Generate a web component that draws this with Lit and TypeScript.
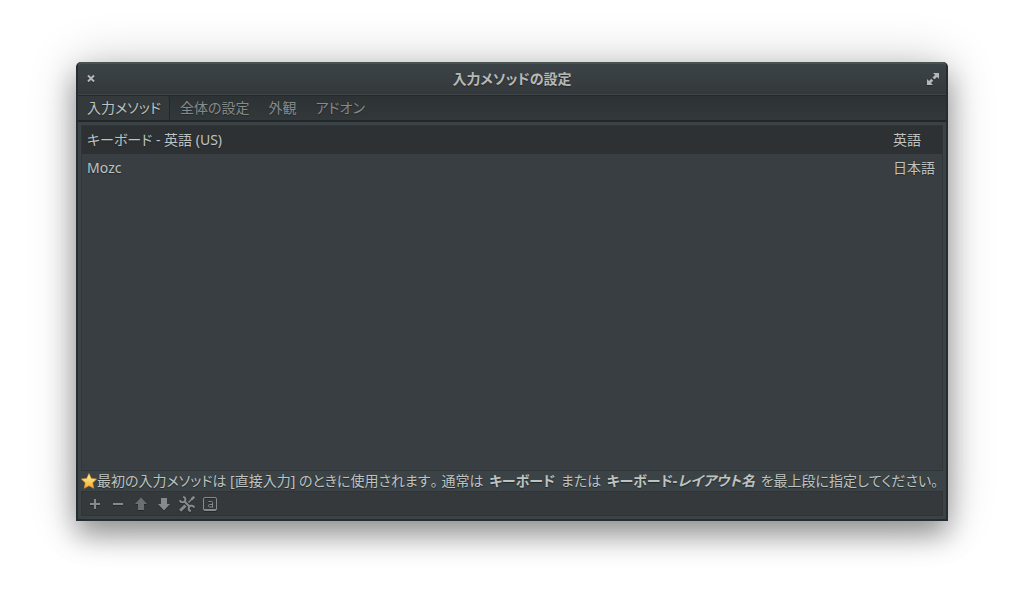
import { LitElement, html, css, svg } from "lit";
import { customElement, state } from "lit/decorators.js";

interface InputMethod {
  name: string;
  language: string;
}

const TABS = ["入力メソッド", "全体の設定", "外観", "アドオン"];

const METHODS: InputMethod[] = [
  { name: "キーボード - 英語 (US)", language: "英語" },
  { name: "Mozc", language: "日本語" },
];

const TOOLS = [
  {
    label: "追加",
    disabled: false,
    icon: svg`<path d="M8 3v10M3 8h10" fill="none" stroke="currentColor" stroke-width="2"/>`,
  },
  {
    label: "削除",
    disabled: false,
    icon: svg`<path d="M3 8h10" fill="none" stroke="currentColor" stroke-width="2"/>`,
  },
  {
    label: "上へ",
    disabled: true,
    icon: svg`<path d="M8 1.500l6 6.500h-3v6H5V8H2z" fill="currentColor"/>`,
  },
  {
    label: "下へ",
    disabled: false,
    icon: svg`<path d="M8 14.500l6-6.500h-3V2H5v6H2z" fill="currentColor"/>`,
  },
  {
    label: "設定",
    disabled: false,
    icon: svg`<g fill="none" stroke="currentColor">
      <path d="M5 5L11 11" stroke-width="2.200"/>
      <path d="M4.200 0.800A2.800 2.800 0 1 1 0.800 4.200M15.200 11.800A2.800 2.800 0 1 0 11.800 15.200" stroke-width="2"/>
      <path d="M15 1L9.500 6.500" stroke-width="1.600"/>
      <path d="M15.200 0.800L12.500 3.500" stroke-width="2.600"/>
      <path d="M6.500 9.500L1.200 14.800" stroke-width="3"/>
    </g>`,
  },
  {
    label: "キーボードレイアウト",
    disabled: false,
    icon: svg`<rect x="1.500" y="1.500" width="13" height="13" rx="1.500" fill="none" stroke="currentColor"/>
      <path d="M2 13.500h12" stroke="currentColor"/>
      <path d="M6.500 5.500H9.500Q10.500 5.500 10.500 6.500V11.500M10.500 8.500H7.500Q6.500 8.500 6.500 9.800Q6.500 11 7.500 11H10.500" fill="none" stroke="currentColor"/>`,
  },
];

@customElement("app-root")
export class AppRoot extends LitElement {
  @state() private tab = 0;
  @state() private selected = 0;

  static styles = css`
    :host {
      display: flex;
      box-sizing: border-box;
      min-height: 100vh;
      padding: 62px 76px 90px;
      background: #fff;
      color: #bec3c1;
      font-family: "Noto Sans", "Noto Sans CJK JP", sans-serif;
      font-size: 14px;
      line-height: 20px;
      font-feature-settings: "palt";
      font-kerning: none;
      text-shadow: 0 1px 1px #24282a;
    }
    button {
      margin: 0;
      border: 0;
      background: none;
      color: inherit;
      font: inherit;
      font-feature-settings: inherit;
      font-kerning: inherit;
      text-shadow: inherit;
    }
    svg {
      display: block;
      filter: drop-shadow(0 1px 0 #25292b);
    }
    .window {
      flex: 1;
      min-width: 0;
      display: flex;
      flex-direction: column;
      box-sizing: border-box;
      border: 2px solid #272c2e;
      border-top: 0;
      border-radius: 5px 5px 0 0;
      background: #3b4346;
      box-shadow:
        0 14px 28px rgba(0, 0, 0, 0.36),
        0 0 50px rgba(0, 0, 0, 0.2);
    }
    .titlebar {
      display: flex;
      align-items: center;
      box-sizing: border-box;
      height: 33px;
      padding: 0 5px;
      border-top: 2px solid #4b5254;
      border-bottom: 1px solid #3f4548;
      border-radius: 4px 4px 0 0;
      background: linear-gradient(#3c4346, #33383b);
    }
    .title {
      flex: 1;
      margin: 0;
      text-align: center;
      font-size: 14px;
      font-weight: 700;
      color: #b4b9b8;
    }
    .control {
      display: flex;
      padding: 0;
      color: #b4b9b8;
    }
    .tabs {
      display: flex;
      gap: 1px;
      box-sizing: border-box;
      height: 27px;
      border-top: 1px solid #25292b;
      border-bottom: 2px solid #22272a;
      background: linear-gradient(#2d3234, #33383b);
    }
    .tab {
      padding: 0 9px 1px;
      color: #858a8a;
    }
    .tab.active {
      padding-right: 8px;
      border-right: 1px solid #24282a;
      border-top-right-radius: 3px;
      background: #34393c;
      color: #bec3c1;
    }
    .page {
      flex: 1;
      display: flex;
      flex-direction: column;
      padding: 3px;
    }
    .list {
      flex: 1;
      border: 1px solid #303538;
      background: #393e42;
    }
    .methods {
      width: 100%;
      border-collapse: collapse;
    }
    .methods td {
      height: 28px;
      padding: 0 5px;
    }
    .methods td:last-child {
      width: 44px;
    }
    .methods .selected {
      background: #2d3134;
    }
    .hint {
      display: flex;
      align-items: center;
      margin: 0;
      height: 20px;
      white-space: nowrap;
    }
    .hint b {
      margin: 0 2px;
    }
    .sentence + .sentence {
      margin-left: 4px;
    }
    .star {
      flex: none;
      filter: none;
    }
    .toolbar {
      display: flex;
      align-items: center;
      box-sizing: border-box;
      height: 25px;
      padding: 0 5px;
      gap: 7px;
      border: 1px solid #2f3437;
      background: #35393c;
      color: #858a8a;
    }
    .tool {
      padding: 0;
    }
    .tool:disabled {
      color: #6a6f71;
    }
  `;

  render() {
    return html`
      <main class="window">
        <header class="titlebar">
          <button class="control" aria-label="閉じる">
            <svg width="16" height="16" viewBox="0 0 16 16">
              <path d="M5 4.500l6 6M11 4.500l-6 6" stroke="currentColor" stroke-width="2" />
            </svg>
          </button>
          <h1 class="title">入力メソッドの設定</h1>
          <button class="control" aria-label="最大化">
            <svg width="16" height="16" viewBox="0 0 16 16">
              <path
                d="M8 2h6v6l-2-2-2.500 2.500-2-2L10 4zM2 8l2 2 2.300-2.300 2 2L6 12l2 2H2z"
                fill="currentColor"
              />
            </svg>
          </button>
        </header>
        <nav class="tabs" role="tablist">
          ${TABS.map(
            (label, i) => html`<button
              class="tab ${i === this.tab ? "active" : ""}"
              role="tab"
              aria-selected=${i === this.tab}
              @click=${() => (this.tab = i)}
            >${label}</button>`
          )}
        </nav>
        <section class="page">
          <div class="list">
            <table class="methods">
              <tbody>
                ${METHODS.map(
                  (m, i) => html`<tr
                    class=${i === this.selected ? "selected" : ""}
                    @click=${() => (this.selected = i)}
                  ><td>${m.name}</td><td>${m.language}</td></tr>`
                )}
              </tbody>
            </table>
          </div>
          <p class="hint">
            <svg class="star" width="16" height="16" viewBox="0 0 16 16">
              <defs>
                <linearGradient id="gold" x1="0" y1="0" x2="0" y2="1">
                  <stop offset="0" stop-color="#fff3a8" />
                  <stop offset="1" stop-color="#f9ac28" />
                </linearGradient>
              </defs>
              <path
                d="M8 .5l2.300 4.900 5.300.7-3.900 3.700 1 5.500L8 12.700l-4.700 2.600 1-5.500L.4 6.100l5.300-.7z"
                fill="url(#gold)" stroke="#e8982a" stroke-width="0.600" stroke-linejoin="round"
              />
            </svg>
            <span class="sentence">最初の入力メソッドは [直接入力] のときに使用されます。</span>
            <span class="sentence">通常は <b>キーボード</b> または <b>キーボード-<i>レイアウト名</i></b> を最上段に指定してください。</span>
          </p>
          <div class="toolbar" role="toolbar">
            ${TOOLS.map(
              (t) => html`<button class="tool" aria-label=${t.label} ?disabled=${t.disabled}>
                <svg width="16" height="16" viewBox="0 0 16 16">${t.icon}</svg>
              </button>`
            )}
          </div>
        </section>
      </main>
    `;
  }
}
